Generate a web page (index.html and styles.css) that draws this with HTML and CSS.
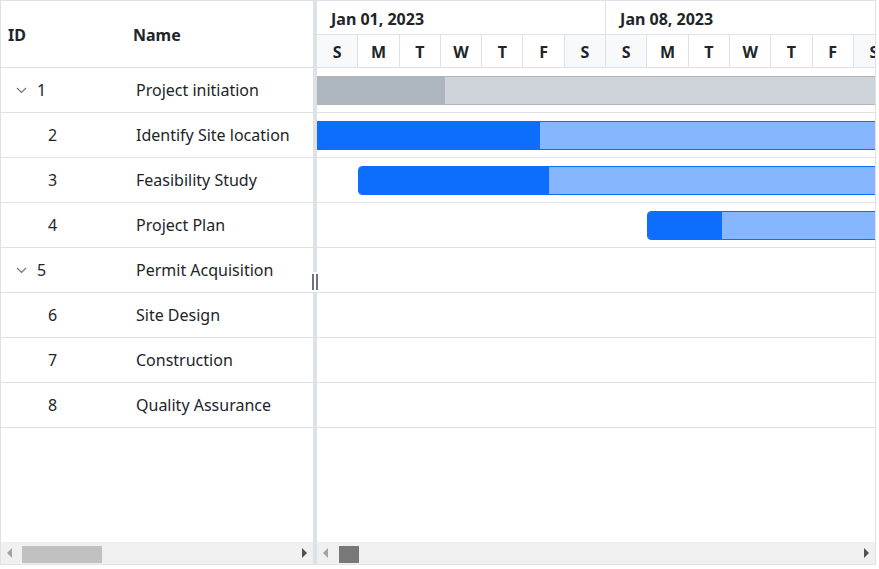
FILE: index.html
```html
<!DOCTYPE html>
<html>
<head>
<meta charset="utf-8">
<link rel="stylesheet" href="styles.css">
</head>
<body>
<div class="gantt">
  <div class="grid-pane">
    <div class="grid-header">
      <div class="col-id">ID</div>
      <div class="col-name">Name</div>
    </div>
    <div class="grid-body">
      <div class="grow"><div class="cid"><svg class="chev" width="11" height="7" viewBox="0 0 11 7"><path d="M1 1 L5.5 5.5 L10 1" fill="none" stroke="#6c757d" stroke-width="1.2"/></svg><span>1</span></div><div class="cname">Project initiation</div></div>
      <div class="grow"><div class="cid child">2</div><div class="cname">Identify Site location</div></div>
      <div class="grow"><div class="cid child">3</div><div class="cname">Feasibility Study</div></div>
      <div class="grow"><div class="cid child">4</div><div class="cname">Project Plan</div></div>
      <div class="grow"><div class="cid"><svg class="chev" width="11" height="7" viewBox="0 0 11 7"><path d="M1 1 L5.5 5.5 L10 1" fill="none" stroke="#6c757d" stroke-width="1.2"/></svg><span>5</span></div><div class="cname">Permit Acquisition</div></div>
      <div class="grow"><div class="cid child">6</div><div class="cname">Site Design</div></div>
      <div class="grow"><div class="cid child">7</div><div class="cname">Construction</div></div>
      <div class="grow"><div class="cid child">8</div><div class="cname">Quality Assurance</div></div>
    </div>
    <div class="hscroll">
      <span class="arr arr-left dim"></span>
      <div class="track"><div class="thumb thumb-grid"></div></div>
      <span class="arr arr-right"></span>
    </div>
  </div>
  <div class="splitter"><div class="grip"></div></div>
  <div class="chart-pane">
    <div class="timeline">
      <div class="tier-top">
        <div class="week">Jan 01, 2023</div>
        <div class="week">Jan 08, 2023</div>
      </div>
      <div class="tier-bottom">
        <div class="day we">S</div><div class="day">M</div><div class="day">T</div><div class="day">W</div><div class="day">T</div><div class="day">F</div><div class="day we">S</div>
        <div class="day we">S</div><div class="day">M</div><div class="day">T</div><div class="day">W</div><div class="day">T</div><div class="day">F</div><div class="day we">S</div>
      </div>
    </div>
    <div class="chart-body">
      <div class="crow"><div class="bar parent bar1"><div class="prog"></div></div></div>
      <div class="crow"><div class="bar task bar2"><div class="prog"></div></div></div>
      <div class="crow"><div class="bar task bar3"><div class="prog"></div></div></div>
      <div class="crow"><div class="bar task bar4"><div class="prog"></div></div></div>
      <div class="crow"></div>
      <div class="crow"></div>
      <div class="crow"></div>
      <div class="crow"></div>
    </div>
    <div class="hscroll">
      <span class="arr arr-left dim"></span>
      <div class="track"><div class="thumb thumb-chart"></div></div>
      <span class="arr arr-right"></span>
    </div>
  </div>
</div>
</body>
</html>
```

FILE: styles.css
```css
* { box-sizing: border-box; }
body {
  margin: 0;
  background: #fff;
  font-family: "Noto Sans", "Open Sans", sans-serif;
  color: #212529;
}
.gantt {
  width: 876px;
  height: 565px;
  border: 1px solid #dee2e6;
  display: flex;
  overflow: hidden;
}
.grid-pane {
  width: 312px;
  display: flex;
  flex-direction: column;
  flex: none;
}
.grid-header {
  height: 67px;
  border-bottom: 1px solid #dee2e6;
  display: flex;
  align-items: center;
  font-weight: 700;
  font-size: 16px;
  flex: none;
  padding-top: 1px;
}
.col-id { width: 132px; padding-left: 7px; }
.col-name { flex: 1; }
.grid-body { flex: 1; }
.grow {
  height: 45px;
  border-bottom: 1px solid #dee2e6;
  display: flex;
  align-items: center;
  font-size: 16px;
}
.cid {
  width: 135px;
  display: flex;
  align-items: center;
  padding-left: 15px;
}
.cid .chev { margin-right: 10px; margin-top: 1px; }
.cid.child { padding-left: 47px; }
.cname { flex: 1; white-space: nowrap; }

.splitter {
  width: 4px;
  flex: none;
  background: #dee2e6;
  position: relative;
}
.grip {
  position: absolute;
  left: -3px;
  top: 271px;
  width: 10px;
  height: 20px;
  background: #fff;
}
.grip::before, .grip::after {
  content: "";
  position: absolute;
  top: 2px;
  width: 2px;
  height: 16px;
  background: #6c757d;
}
.grip::before { left: 2px; }
.grip::after { right: 2px; }

.chart-pane {
  flex: 1;
  display: flex;
  flex-direction: column;
  overflow: hidden;
  min-width: 0;
}
.timeline {
  height: 67px;
  border-bottom: 1px solid #dee2e6;
  flex: none;
  font-weight: 700;
  font-size: 16px;
}
.tier-top {
  height: 34px;
  border-bottom: 1px solid #dee2e6;
  display: flex;
}
.week {
  width: 289.1px;
  flex: none;
  border-right: 1px solid #dee2e6;
  padding-left: 14px;
  display: flex;
  align-items: center;
  padding-top: 2px;
}
.tier-bottom {
  height: 32px;
  display: flex;
}
.day {
  width: 41.3px;
  flex: none;
  border-right: 1px solid #dee2e6;
  display: flex;
  align-items: center;
  justify-content: center;
  padding-top: 1px;
}
.day.we { background: #f8f9fa; }

.chart-body { flex: 1; }
.crow {
  height: 45px;
  border-bottom: 1px solid #dee2e6;
  position: relative;
}
.bar {
  position: absolute;
  top: 8px;
  height: 29px;
  overflow: hidden;
}
.bar .prog { height: 100%; }
.parent {
  background: #ced4da;
  border: 1px solid #adb5bd;
  border-left: none;
}
.parent .prog { background: #adb5bd; }
.task {
  background: #86b7fe;
  border: 1px solid #0d6efd;
  border-radius: 4px;
}
.task .prog { background: #0d6efd; }
.bar1 { left: 0; width: 900px; }
.bar1 .prog { width: 128px; }
.bar2 { left: -40px; width: 1000px; }
.bar2 .prog { width: 262px; }
.bar3 { left: 41px; width: 900px; }
.bar3 .prog { width: 190px; }
.bar4 { left: 330px; width: 900px; }
.bar4 .prog { width: 74px; }

.hscroll {
  height: 22px;
  flex: none;
  background: #f0f0f0;
  display: flex;
  align-items: center;
  padding: 0 6px;
}
.track { flex: 1; height: 17px; position: relative; margin: 0 4px; }
.thumb { position: absolute; top: 1px; height: 17px; }
.thumb-grid { left: 6px; width: 80px; background: #c1c1c1; }
.thumb-chart { left: 7px; width: 20px; background: #787878; }
.arr { width: 0; height: 0; border-top: 5px solid transparent; border-bottom: 5px solid transparent; flex: none; }
.arr-left { border-right: 5px solid #505050; }
.arr-right { border-left: 5px solid #505050; }
.arr.dim.arr-left { border-right-color: #a3a3a3; }
```
